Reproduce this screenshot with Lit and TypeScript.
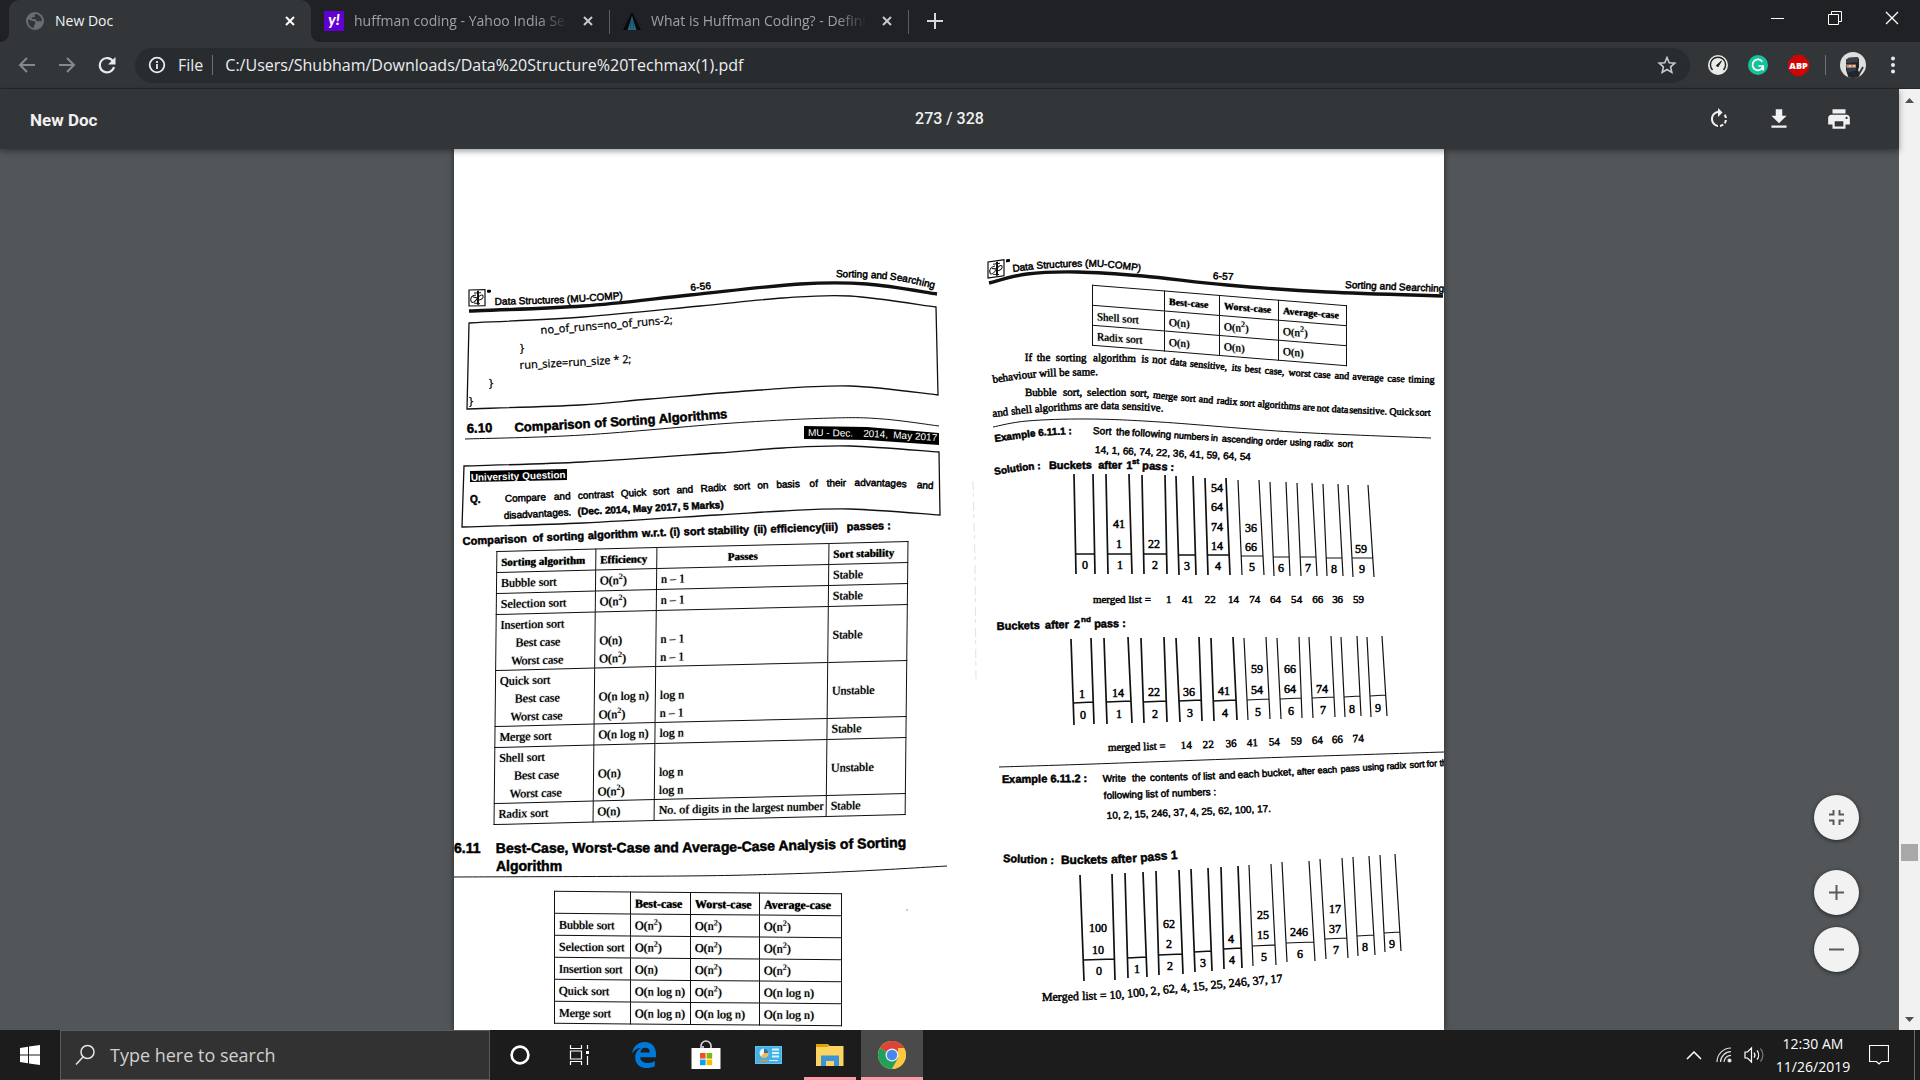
import { LitElement, html, css, svg } from "lit";
import { customElement } from "lit/decorators.js";

type Pt = [number, number];
type Word = [number, string];

/** Smooth path through the given points (Catmull-Rom turned into cubic segments). */
function curve(pts: Pt[], start = "M"): string {
  let d = `${start}${pts[0][0]} ${pts[0][1]}`;
  for (let i = 0; i < pts.length - 1; i++) {
    const p0 = pts[i - 1] ?? pts[i];
    const p1 = pts[i];
    const p2 = pts[i + 1];
    const p3 = pts[i + 2] ?? p2;
    const c1 = [p1[0] + (p2[0] - p0[0]) / 6, p1[1] + (p2[1] - p0[1]) / 6];
    const c2 = [p2[0] - (p3[0] - p1[0]) / 6, p2[1] - (p3[1] - p1[1]) / 6];
    d += ` C${c1[0].toFixed(2)} ${c1[1].toFixed(2)} ${c2[0].toFixed(2)} ${c2[1].toFixed(2)} ${p2[0]} ${p2[1]}`;
  }
  return d;
}

/** A text line set along a bent baseline; words carry their own x where the line is justified. */
function line(id: string, cls: string, pts: Pt[], words: string | Word[]) {
  const last = pts[pts.length - 1];
  const path = curve(pts) + ` l60 ${Math.round(((last[1] - pts[0][1]) / (last[0] - pts[0][0])) * 60)}`;
  const list: Word[] = typeof words === "string" ? [[pts[0][0], words]] : words;
  return svg`<path id=${id} class="base" d=${path}></path>
    <text class=${cls}><textPath href=${"#" + id}>${list.map(
      ([x, w]) => svg`<tspan x=${x - pts[0][0]}>${w} </tspan>`
    )}</textPath></text>`;
}

const rule = (pts: Pt[], w = 1) => svg`<path class="rule" stroke-width=${w} d=${curve(pts)}></path>`;

/** Frame with bent top and bottom edges. */
const frame = (top: Pt[], bottom: Pt[]) =>
  svg`<path class="rule" stroke-width="1.3" d=${curve(top) + " " + curve([...bottom].reverse(), "L") + " Z"}></path>`;

interface Bucket {
  top: [number, number, number];
  foot: [number, number, number];
  bar: number;
  values?: [string, number][];
}

function buckets(items: Bucket[], labelGap: number, tilt: number) {
  return items.map((b, i) => {
    const [tl, tr, ty] = b.top;
    const [fl, fr, fy] = b.foot;
    const k = (b.bar - ty) / (fy - ty);
    const l = tl + (fl - tl) * k;
    const r = tr + (fr - tr) * k;
    const w = i < 5 ? 1.7 : 1.2;
    const mid = Math.round((l + r) / 2);
    return svg`<path class="rule" stroke-width=${w}
        d=${`M${tl} ${ty} L${fl} ${fy} M${tr} ${ty - tilt} L${fr} ${fy - tilt} M${l} ${b.bar} L${r} ${b.bar - tilt}`}></path>
      ${(b.values ?? []).map(([v, y]) => svg`<text class="s12 mid" x=${mid - 1} y=${y + 4}>${v}</text>`)}
      <text class="s12 mid" x=${mid} y=${b.bar + labelGap + 4}>${i}</text>`;
  });
}

const PASS_1: Bucket[] = [
  { top: [1074, 1093, 473], foot: [1076, 1095, 573], bar: 553 },
  { top: [1106, 1129, 473], foot: [1108, 1132, 573], bar: 553, values: [["41", 523], ["1", 543]] },
  { top: [1142, 1165, 474], foot: [1144, 1167, 573], bar: 553, values: [["22", 543]] },
  { top: [1176, 1193, 475], foot: [1179, 1196, 574], bar: 554 },
  { top: [1205, 1226, 477], foot: [1208, 1230, 574], bar: 554, values: [["54", 487], ["64", 506], ["74", 526], ["14", 545]] },
  { top: [1238, 1259, 479], foot: [1242, 1264, 574], bar: 555, values: [["36", 527], ["66", 546]] },
  { top: [1270, 1286, 481], foot: [1274, 1290, 575], bar: 556 },
  { top: [1297, 1312, 482], foot: [1301, 1317, 575], bar: 556 },
  { top: [1323, 1338, 483], foot: [1327, 1343, 575], bar: 557 },
  { top: [1348, 1368, 484], foot: [1353, 1374, 576], bar: 557, values: [["59", 548]] },
];

const PASS_2: Bucket[] = [
  { top: [1071, 1091, 638], foot: [1074, 1094, 724], bar: 702, values: [["1", 693]] },
  { top: [1104, 1128, 637], foot: [1107, 1132, 723], bar: 701, values: [["14", 692]] },
  { top: [1141, 1164, 637], foot: [1144, 1167, 722], bar: 701, values: [["22", 691]] },
  { top: [1176, 1199, 637], foot: [1180, 1202, 721], bar: 700, values: [["36", 691]] },
  { top: [1211, 1233, 637], foot: [1214, 1237, 720], bar: 700, values: [["41", 690]] },
  { top: [1244, 1266, 637], foot: [1248, 1270, 719], bar: 699, values: [["59", 668], ["54", 689]] },
  { top: [1277, 1299, 637], foot: [1281, 1302, 718], bar: 698, values: [["66", 668], ["64", 688]] },
  { top: [1309, 1331, 636], foot: [1313, 1335, 717], bar: 697, values: [["74", 688]] },
  { top: [1341, 1357, 636], foot: [1345, 1361, 716], bar: 696 },
  { top: [1367, 1382, 636], foot: [1371, 1387, 716], bar: 695 },
];

const PASS_LAST: Bucket[] = [
  { top: [1080, 1112, 874], foot: [1084, 1115, 980], bar: 959, values: [["100", 927], ["10", 949]] },
  { top: [1125, 1143, 872], foot: [1128, 1147, 977], bar: 957 },
  { top: [1156, 1179, 870], foot: [1159, 1183, 974], bar: 954, values: [["62", 923], ["2", 943]] },
  { top: [1191, 1208, 868], foot: [1195, 1212, 971], bar: 951 },
  { top: [1221, 1238, 866], foot: [1224, 1242, 968], bar: 948, values: [["4", 938]] },
  { top: [1249, 1271, 864], foot: [1253, 1276, 965], bar: 945, values: [["25", 914], ["15", 934]] },
  { top: [1282, 1309, 861], foot: [1287, 1315, 961], bar: 942, values: [["246", 931]] },
  { top: [1320, 1342, 858], foot: [1326, 1348, 958], bar: 938, values: [["17", 908], ["37", 928]] },
  { top: [1353, 1369, 856], foot: [1358, 1375, 955], bar: 935 },
  { top: [1380, 1395, 854], foot: [1385, 1401, 951], bar: 932 },
];

const N2 = html`O(n<sup>2</sup>)`;
const N1 = html`O(n)`;
const NL = html`O(n log n)`;

@customElement("scanned-page")
export class ScannedPage extends LitElement {
  static styles = css`
    :host { display: block; }
    .sheet {
      display: grid;
      grid-template-columns: 506fr 484fr;
      align-items: start;
      background: #fff;
      color: #000;
      overflow: hidden;
      height: 100%;
      font-family: "Liberation Serif", "Times New Roman", serif;
    }
    .col { display: flex; flex-direction: column; align-items: flex-start; min-width: 0; }
    .fig { display: block; width: 100%; overflow: visible; }
    .base { fill: none; stroke: none; }
    .rule { fill: none; stroke: #111; }
    text { fill: #000; stroke: #000; stroke-width: 0.5; }
    .b10, .b11, .b12, .b13, .b14, .a9, .a10, .w10, .wb10 { font-family: "Liberation Sans", Arial, sans-serif; }
    .a9 { font-size: 9px; }
    .a10 { font-size: 10px; }
    .b10, .b11, .b12, .b13, .b14, .wb10 { font-weight: 700; }
    .b8 { font: 700 8px "Liberation Sans", Arial, sans-serif; }
    .b10 { font-size: 10px; }
    .b11 { font-size: 11px; }
    .b12 { font-size: 12px; }
    .b13 { font-size: 13px; }
    .b14 { font-size: 14px; }
    .w10, .wb10 { font-size: 10px; fill: #fff; stroke: none; }
    .s10 { font-size: 10px; }
    .s11 { font-size: 11px; }
    .s12 { font-size: 12px; }
    .code { font: 11px "Open Sans", "Noto Sans", sans-serif; stroke-width: 0.3; }
    .mid { text-anchor: middle; }
    table { border-collapse: collapse; table-layout: fixed; font-size: 12px; line-height: 18px; text-shadow: 0 0 1px #000; }
    td, th { border: 1px solid #111; padding: 0 4px; text-align: left; font-weight: 400; white-space: nowrap; }
    thead th { font-weight: 700; }
    sup { font-size: 8px; line-height: 0; vertical-align: 5px; }
    .compare { width: 411px; margin-left: 41px; transform: skewX(-0.6deg) skewY(-1.4deg); }
    .compare tr { height: 21px; }
    .compare .tall { height: 56px; }
    .compare thead { font-size: 11px; }
    .compare thead .center { text-align: center; }
    .sub { display: block; padding-left: 15px; }
    .sub.worst { padding-left: 11px; }
    .gap { display: block; height: 18px; }
    .lines { display: block; }
    .cases { width: 287px; margin-left: 100px; transform: skewY(0.5deg); }
    .cases tr { height: 22px; }
    .small { width: 254px; margin-left: 132px; font-size: 11px; transform: skewY(4.6deg); }
    .small tr { height: 20px; }
    .small thead { font-size: 10px; }
  `;

  private logo(x: number, y: number, skew: number) {
    return svg`<g transform=${`translate(${x} ${y}) skewY(${skew})`}>
      <rect class="rule" stroke-width="1.2" x="0" y="0" width="16" height="16"></rect>
      <path class="rule" stroke-width="2" d="M9 1v14"></path>
      <path class="rule" stroke-width="1" d="M5 3h7M7 5C3 5 1 8 2 11s4 1 6-2 5-5 6-3-2 5-6 4M4 7l4 1M5 13l6 1"></path>
      <rect x="18" y="0" width="4" height="3" rx="1"></rect></g>`;
  }

  private comparison() {
    const group = (name: string, best: unknown, worst: unknown, pb: string, pw: string, s: string) => html`
      <tr class="tall">
        <td>${name}<span class="sub">Best case</span><span class="sub worst">Worst case</span></td>
        <td><span class="gap"></span><span class="lines">${best}</span><span class="lines">${worst}</span></td>
        <td><span class="gap"></span><span class="lines">${pb}</span><span class="lines">${pw}</span></td>
        <td>${s}</td>
      </tr>`;
    const row = (name: string, e: unknown, p: string, s: string) =>
      html`<tr><td>${name}</td><td>${e}</td><td>${p}</td><td>${s}</td></tr>`;
    return html`<table class="compare">
      <colgroup><col style="width:99px" /><col style="width:61px" /><col style="width:172px" /><col style="width:79px" /></colgroup>
      <thead><tr><th>Sorting algorithm</th><th>Efficiency</th><th class="center">Passes</th><th>Sort stability</th></tr></thead>
      <tbody>
        ${row("Bubble sort", N2, "n – 1", "Stable")} ${row("Selection sort", N2, "n – 1", "Stable")}
        ${group("Insertion sort", N1, N2, "n – 1", "n – 1", "Stable")}
        ${group("Quick sort", NL, N2, "log n", "n – 1", "Unstable")}
        ${row("Merge sort", NL, "log n", "Stable")}
        ${group("Shell sort", N1, N2, "log n", "log n", "Unstable")}
        ${row("Radix sort", N1, "No. of digits in the largest number", "Stable")}
      </tbody>
    </table>`;
  }

  private cases(cls: string, cols: number[], rows: [string, unknown, unknown, unknown][]) {
    return html`<table class=${cls}>
      <colgroup>${cols.map((w) => html`<col style="width:${w}px" />`)}</colgroup>
      <thead><tr><th></th><th>Best-case</th><th>Worst-case</th><th>Average-case</th></tr></thead>
      <tbody>${rows.map(([n, a, b, c]) => html`<tr><th>${n}</th><td>${a}</td><td>${b}</td><td>${c}</td></tr>`)}</tbody>
    </table>`;
  }

  render() {
    return html`<article class="sheet">
      <section class="col">
        <svg class="fig" viewBox="454 149 506 397">
          ${this.logo(469, 290, -1)}
          ${line("l1", "a10", [[495, 305], [560, 303], [620, 299]], "Data Structures (MU-COMP)")}
          ${line("l2", "a10", [[691, 291], [710, 289]], "6-56")}
          ${line("l3", "a10", [[836, 277], [870, 278], [900, 281], [936, 289]], "Sorting and Searching")}
          ${rule([[469, 311], [583, 306], [690, 295], [800, 284], [867, 284], [937, 294]], 3.4)}
          ${frame(
            [[469, 323], [583, 317], [700, 306], [783, 298], [850, 296], [936, 307]],
            [[467, 409], [580, 405], [650, 399], [760, 390], [850, 386], [938, 395]]
          )}
          ${line("l4", "code", [[541, 334], [668, 324]], "no_of_runs=no_of_runs-2;")}
          <text class="code" x="520" y="352">}</text>
          ${line("l5", "code", [[520, 369], [629, 363]], "run_size=run_size * 2;")}
          <text class="code" x="489" y="387">}</text>
          <text class="code" x="469" y="405">}</text>
          ${line("l6", "b13", [[467, 433], [493, 432]], "6.10")}
          ${line("l7", "b13", [[515, 432], [620, 426], [731, 418]], "Comparison of Sorting Algorithms")}
          ${rule([[465, 439], [583, 435], [733, 423], [833, 418], [883, 419], [939, 426]])}
          <path d="M804 426 L867 427 L939 433 V445 L867 440 L804 439 Z"></path>
          ${line("l8", "w10", [[808, 436], [870, 437], [935, 441]], [[808, "MU - Dec."], [863, "2014,"], [893, "May 2017"]])}
          ${frame(
            [[464, 466], [583, 462], [717, 453], [783, 448], [850, 446], [939, 452]],
            [[462, 527], [583, 523], [717, 515], [783, 511], [850, 509], [940, 515]]
          )}
          <path d="M470 471 L567 469 V480 L470 482 Z"></path>
          ${line("l9", "wb10", [[471, 481], [566, 478]], "University Question")}
          <text class="b10" x="470" y="503">Q.</text>
          ${line("l10", "a10", [[505, 502], [621, 497], [701, 492], [777, 488], [867, 486], [933, 489]], [
            [505, "Compare"], [554, "and"], [578, "contrast"], [621, "Quick"], [653, "sort"], [677, "and"], [701, "Radix"],
            [734, "sort"], [758, "on"], [777, "basis"], [810, "of"], [827, "their"], [855, "advantages"], [917, "and"],
          ])}
          ${line("l11", "a10", [[504, 519], [578, 515]], "disadvantages.")}
          ${line("l12", "b10", [[578, 515], [723, 508]], "(Dec. 2014, May 2017, 5 Marks)")}
          ${line("l13", "b11", [[463, 545], [640, 537], [760, 533], [894, 529]], [
            [463, "Comparison"], [533, "of"], [547, "sorting"], [588, "algorithm"], [642, "w.r.t."], [670, "(i)"],
            [684, "sort stability"], [754, "(ii)"], [771, "efficiency(iii)"], [847, "passes :"],
          ])}
        </svg>
        ${this.comparison()}
        <svg class="fig" viewBox="454 820 506 72">
          <text class="b14" x="454" y="853">6.11</text>
          ${line("l14", "b14", [[496, 853], [700, 852], [800, 850], [911, 847]], "Best-Case, Worst-Case and Average-Case Analysis of Sorting")}
          <text class="b14" x="496" y="871">Algorithm</text>
          ${rule([[454, 877], [683, 876], [783, 874], [860, 871], [947, 866]])}
          <circle cx="907" cy="910" r="1" fill="#bbb"></circle>
        </svg>
        ${this.cases("cases", [76, 60, 69, 82], [
          ["Bubble sort", N2, N2, N2],
          ["Selection sort", N2, N2, N2],
          ["Insertion sort", N1, N2, N2],
          ["Quick sort", NL, N2, NL],
          ["Merge sort", NL, NL, NL],
        ])}
      </section>
      <section class="col">
        <svg class="fig" viewBox="960 149 484 146">
          ${this.logo(988, 262, -8)}
          ${line("r1", "a10", [[1013, 272], [1050, 268], [1100, 267], [1145, 272]], "Data Structures (MU-COMP)")}
          ${line("r2", "a10", [[1213, 279], [1232, 280]], "6-57")}
          ${line("r3", "a10", [[1345, 288], [1395, 290], [1442, 292]], "Sorting and Searching")}
          ${rule([[989, 283], [1027, 274], [1077, 272], [1143, 276], [1227, 285], [1327, 292], [1443, 296]], 3.4)}
        </svg>
        ${this.cases("small", [72, 55, 59, 68], [
          ["Shell sort", N1, N2, N2],
          ["Radix sort", N1, N1, N1],
        ])}
        <svg class="fig" viewBox="960 355 484 115">
          ${line("r4", "s11", [[1025, 360], [1135, 361], [1193, 366], [1283, 374], [1377, 380], [1433, 382]], [
            [1025, "If"], [1037, "the"], [1056, "sorting"], [1093, "algorithm"], [1141, "is"], [1152, "not"],
          ])}
          ${line("r5", "s10", [[1025, 360], [1135, 361], [1193, 366], [1283, 374], [1377, 380], [1433, 382]], [
            [1170, "data"], [1190, "sensitive,"], [1232, "its"], [1245, "best"], [1265, "case,"], [1289, "worst"],
            [1314, "case"], [1335, "and"], [1353, "average"], [1388, "case"], [1409, "timing"],
          ])}
          ${line("r6", "s11", [[993, 382], [1040, 376], [1103, 374]], "behaviour will be same.")}
          ${line("r7", "s11", [[1025, 395], [1127, 395], [1173, 399], [1260, 406], [1350, 412], [1432, 415]], [
            [1025, "Bubble"], [1063, "sort,"], [1087, "selection"], [1130, "sort,"],
          ])}
          ${line("r8", "s10", [[1025, 395], [1127, 395], [1173, 399], [1260, 406], [1350, 412], [1432, 415]], [
            [1153, "merge"], [1181, "sort"], [1199, "and"], [1217, "radix"], [1240, "sort"], [1258, "algorithms"],
            [1303, "are"], [1317, "not"], [1332, "data"], [1350, "sensitive."], [1390, "Quick"], [1416, "sort"],
          ])}
          ${line("r9", "s11", [[993, 416], [1040, 411], [1103, 408], [1170, 411]], "and shell algorithms are data sensitive.")}
          ${rule([[993, 426], [1027, 420], [1087, 418], [1160, 421], [1293, 431], [1431, 437]])}
          ${line("r10", "b10", [[995, 441], [1040, 435], [1076, 433]], "Example 6.11.1 :")}
          ${line("r11", "a10", [[1093, 433], [1170, 437], [1260, 443], [1346, 446]], [
            [1093, "Sort"], [1116, "the"], [1132, "following"],
          ])}
          ${line("r12", "a9", [[1093, 433], [1170, 437], [1260, 443], [1346, 446]], [
            [1174, "numbers"], [1211, "in"], [1222, "ascending"], [1266, "order"], [1290, "using"], [1314, "radix"], [1338, "sort"],
          ])}
          ${line("r13", "a10", [[1095, 452], [1245, 459]], "14, 1, 66, 74, 22, 36, 41, 59, 64, 54")}
          ${line("r14", "b10", [[995, 474], [1020, 470], [1042, 468]], "Solution :")}
          ${line("r15", "b11", [[1049, 468], [1132, 468], [1173, 470]], [[1049, "Buckets"], [1098, "after"], [1126, "1"], [1142, "pass :"]])}
          <text class="b8" x="1132" y="463">st</text>
        </svg>
        <svg class="fig" viewBox="960 470 484 145">
          <path d="M973 480 L975 560 L976 680" fill="none" stroke="#e2e2e2" stroke-width="1" stroke-dasharray="9 3 4 5"></path>
          ${buckets(PASS_1, 11, 0)}
          ${line("r16", "s11", [[1093, 602], [1363, 602]], [
            [1093, "merged list ="], [1166, "1"], [1182, "41"], [1205, "22"], [1228, "14"], [1249, "74"], [1270, "64"],
            [1291, "54"], [1312, "66"], [1332, "36"], [1353, "59"],
          ])}
        </svg>
        <svg class="fig" viewBox="960 615 484 143">
          ${line("r17", "b11", [[997, 629], [1071, 627], [1128, 626]], [[997, "Buckets"], [1045, "after"], [1074, "2"], [1094, "pass :"]])}
          <text class="b8" x="1081" y="621">nd</text>
          ${buckets(PASS_2, 12, 1)}
          ${line("r18", "s11", [[1108, 750], [1180, 748], [1362, 741]], [
            [1108, "merged list ="], [1181, "14"], [1203, "22"], [1226, "36"], [1247, "41"], [1269, "54"], [1291, "59"],
            [1312, "64"], [1332, "66"], [1353, "74"],
          ])}
        </svg>
        <svg class="fig" viewBox="960 758 484 92">
          ${rule([[999, 766], [1093, 763], [1260, 757], [1444, 751]])}
          ${line("r19", "b11", [[1002, 782], [1086, 781]], "Example 6.11.2 :")}
          ${line("r20", "a10", [[1103, 781], [1193, 779], [1260, 776], [1327, 772], [1393, 768], [1444, 765]], [
            [1103, "Write"], [1132, "the"], [1150, "contents"], [1192, "of"], [1203, "list"], [1219, "and"], [1238, "each"],
            [1262, "bucket,"],
          ])}
          ${line("r20b", "a9", [[1103, 781], [1193, 779], [1260, 776], [1327, 772], [1393, 768], [1444, 765]], [
            [1297, "after"], [1318, "each"], [1341, "pass"], [1363, "using"], [1387, "radix"],
            [1410, "sort"], [1427, "for"], [1440, "the"],
          ])}
          ${line("r21", "a10", [[1104, 798], [1219, 794]], "following list of numbers :")}
          ${line("r22", "a10", [[1107, 818], [1269, 811]], "10, 2, 15, 246, 37, 4, 25, 62, 100, 17.")}
        </svg>
        <svg class="fig" viewBox="960 850 484 180">
          ${line("r23", "b11", [[1003, 861], [1053, 863]], "Solution :")}
          ${line("r24", "b12", [[1061, 863], [1120, 862], [1174, 858]], "Buckets after pass 1")}
          ${buckets(PASS_LAST, 11, 1)}
          ${line("r25", "s12", [[1042, 1000], [1110, 998], [1160, 993], [1273, 982]], "Merged list = 10, 100, 2, 62, 4, 15, 25, 246, 37, 17")}
        </svg>
      </section>
    </article>`;
  }
}

const x10 = svg`<path d="M1 1l8 8M9 1l-8 8" stroke="currentColor" stroke-width="2"></path>`;

@customElement("app-root")
export class AppRoot extends LitElement {
  static styles = css`
    :host { display: block; font-family: "Open Sans", "Noto Sans", sans-serif; color: #e8eaed; }
    * { box-sizing: border-box; }
    button { border: 0; padding: 0; margin: 0; background: none; color: inherit; font: inherit; display: flex; align-items: center; justify-content: center; }
    svg { display: block; }
    .screen { display: flex; flex-direction: column; height: 100vh; overflow: hidden; background: #525659; }
    .tabs { display: flex; height: 42px; background: #202124; padding-left: 9px; flex: none; }
    .tab { display: flex; align-items: center; width: 299px; height: 42px; padding: 0 12px 0 13px; gap: 10px; color: #9da1a6; position: relative; }
    .tab.active { width: 302px; background: #323639; color: #f1f3f4; border-radius: 10px 10px 0 0; padding: 0 11px 0 17px; gap: 11px; }
    .tab.active::before, .tab.active::after { content: ""; position: absolute; bottom: 0; width: 9px; height: 9px; }
    .tab.active::before { left: -9px; background: radial-gradient(circle at 0 0, #202124 9px, #323639 9px); }
    .tab.active::after { right: -9px; background: radial-gradient(circle at 100% 0, #202124 9px, #323639 9px); }
    .tab .name { flex: 1; min-width: 0; font-size: 14px; line-height: 20px; justify-content: flex-start; white-space: nowrap; overflow: hidden; mask-image: linear-gradient(90deg, #000 86%, transparent 100%); }
    .tab.active .name { mask-image: none; }
    .tab .x { width: 20px; height: 20px; color: #c6c9cc; flex: none; }
    .tab.active .x { color: #fff; }
    .tab.sep::after { content: ""; position: absolute; right: 0; top: 10px; height: 24px; width: 1px; background: #5a5d61; }
    .plus { width: 52px; color: #d5d7da; }
    .win { margin-left: auto; display: flex; height: 36px; }
    .win button { width: 57px; color: #fff; }
    .nav { display: flex; align-items: center; height: 47px; background: #323639; border-bottom: 1px solid #26292b; padding: 0 14px 0 7px; flex: none; }
    .nav > button { width: 40px; height: 34px; flex: none; }
    .dim { color: #85898c; }
    .omni { flex: 1; display: flex; align-items: center; height: 35px; border-radius: 18px; background: #282c2f; margin: 0 8px; padding: 0 13px 0 13px; font-size: 16px; }
    .omni .scheme { margin-left: 12px; padding-right: 9px; border-right: 1px solid #6c7073; line-height: 20px; }
    .omni input { flex: 1; min-width: 0; border: 0; outline: 0; background: none; color: #eceef0; font: inherit; padding: 0; margin-left: 12px; height: 30px; }
    .vbar { width: 1px; height: 20px; background: #6d7174; margin: 0 14px 0 7px; }
    .nav .menu { width: 26px; margin-left: 14px; }
    .nav .face { width: 26px; }
    .viewer { flex: 1; min-height: 0; display: flex; }
    .pdf { flex: 1; min-width: 0; display: flex; flex-direction: column; position: relative; }
    .bar { display: grid; grid-template-columns: 1fr auto 1fr; align-items: center; height: 60px; flex: none; background: #323639; color: #f1f1f1; font: 500 16px/22px Roboto, sans-serif; padding: 0 30px; z-index: 1; box-shadow: 0 2px 6px #0006; }
    .bar h1 { font: inherit; font-size: 17px; font-weight: 700; margin: 0; padding-top: 2px; }
    .tools { display: flex; justify-content: flex-end; gap: 30px; padding-right: 15px; }
    .tools button { width: 30px; height: 30px; }
    .stage { flex: 1; min-height: 0; overflow: hidden; display: flex; justify-content: center; padding-right: 1px; }
    .stage scanned-page { width: 990px; max-width: 100%; box-shadow: 0 0 6px #0008; }
    .zoom { position: absolute; right: 40px; bottom: 58px; display: flex; flex-direction: column; gap: 12px; z-index: 2; }
    .zoom button { width: 45px; height: 45px; border-radius: 50%; background: #f2f2f2; color: #5a5a5a; box-shadow: 0 1px 4px #0009; }
    .zoom .fit { margin-bottom: 18px; }
    .scroll { width: 21px; flex: none; background: #f1f1f1; display: flex; flex-direction: column; align-items: center; }
    .scroll button { width: 21px; height: 22px; color: #505050; }
    .track { flex: 1; display: flex; flex-direction: column; width: 17px; }
    .before { flex: 733; }
    .thumb { height: 17px; background: #a8a8a8; }
    .after { flex: 147; }
    .task { height: 50px; flex: none; display: flex; background: #1c1c1c; color: #fff; }
    .task .start { width: 60px; }
    .search { width: 430px; display: flex; align-items: center; gap: 14px; background: #323232; border: 1px solid #5b5b5b; padding: 0 13px; color: #e6e6e6; }
    .search input { flex: 1; min-width: 0; border: 0; outline: 0; background: none; font: inherit; font-size: 18px; color: inherit; padding: 0; }
    .search input::placeholder { color: #d0d0d0; opacity: 1; }
    .apps { display: flex; }
    .apps button { width: 62px; }
    .apps .slim { width: 60px; }
    .apps .gap { margin-right: 3px; }
    .apps .open { padding-top: 3px; border-bottom: 3px solid #fb9aa2; }
    .apps .folder { width: 52px; margin: 0 5px; }
    .apps .current { background: #4a4a4a; }
    .tray { margin-left: auto; display: flex; align-items: center; }
    .tray button { height: 50px; }
    .tray .ic { width: 30px; }
    .clock { width: 88px; text-align: center; font-size: 14px; line-height: 23px; }
    .tray .note { width: 44px; margin: 0 13px 0 0; }
    .tray .desk { width: 6px; border-left: 1px solid #6a6a6a; }
  `;

  private tab(cls: string, icon: unknown, name: string) {
    return html`<div class="tab ${cls}">
      ${icon}<button class="name">${name}</button>
      <button class="x" aria-label="Close tab"><svg width="10" height="10" viewBox="0 0 10 10">${x10}</svg></button>
    </div>`;
  }

  render() {
    const globe = html`<svg width="18" height="18" viewBox="0 0 18 18"><circle cx="9" cy="9" r="9" fill="#6a6e72"></circle>
      <path d="M2 8c2-1 3 1 5 1s3 1 2 3-1 1-1 4c-3 0-6-3-6-8zM9 2c3 0 6 2 7 6-1 2-2 1-3 1s-2 1-3-1-3 0-4-1 0-2 2-2 0-2 1-3z" fill="#323639"></path></svg>`;
    const yahoo = html`<svg width="20" height="20" viewBox="0 0 20 20"><rect width="20" height="20" fill="#6001d2"></rect>
      <text x="10" y="14" text-anchor="middle" font-size="15" font-weight="900" font-family="Lato, sans-serif" fill="#fff" font-style="italic">y!</text></svg>`;
    const tower = html`<svg width="18" height="18" viewBox="0 0 18 18"><path d="M9 0L0 18h4L9 6l5 12h4z" fill="#08090a"></path>
      <path d="M9 4L5 18h8z" fill="#2f7ea3"></path><path d="M8 9l-1 9M10 9l1 9M9 6v12" stroke="#174a63" stroke-width="1"></path></svg>`;
    return html`<div class="screen">
      <header class="tabs">
        ${this.tab("active", globe, "New Doc")} ${this.tab("sep", yahoo, "huffman coding - Yahoo India Search")}
        ${this.tab("sep", tower, "What is Huffman Coding? - Definition")}
        <button class="plus" aria-label="New tab"><svg width="16" height="16" viewBox="0 0 16 16"><path d="M8 0v16M0 8h16" stroke="currentColor" stroke-width="2"></path></svg></button>
        <div class="win">
          <button aria-label="Minimize"><svg width="13" height="13" viewBox="0 0 13 13"><path d="M0 6.500h13" stroke="#fff"></path></svg></button>
          <button aria-label="Restore"><svg width="14" height="14" viewBox="0 0 14 14"><path d="M.5 3.500h10v10h-10zM3.500 3V.5h10v10h-3" fill="none" stroke="#fff"></path></svg></button>
          <button aria-label="Close"><svg width="14" height="14" viewBox="0 0 14 14"><path d="M1 1l12 12M13 1L1 13" stroke="#fff" stroke-width="1.300"></path></svg></button>
        </div>
      </header>
      <nav class="nav">
        <button class="dim" aria-label="Back"><svg width="18" height="16" viewBox="0 0 18 16"><path d="M9 1L2 8l7 7M2 8h15" fill="none" stroke="currentColor" stroke-width="2"></path></svg></button>
        <button class="dim" aria-label="Forward"><svg width="18" height="16" viewBox="0 0 18 16"><path d="M9 1l7 7-7 7M16 8H1" fill="none" stroke="currentColor" stroke-width="2"></path></svg></button>
        <button aria-label="Reload"><svg width="18" height="18" viewBox="0 0 18 18"><path d="M15 5.200A7.200 7.200 0 1 0 16 11" fill="none" stroke="currentColor" stroke-width="2.200"></path><path d="M17.500 1v7.500H10z" fill="currentColor"></path></svg></button>
        <div class="omni">
          <svg width="18" height="18" viewBox="0 0 18 18"><circle cx="9" cy="9" r="7.300" fill="none" stroke="#e8eaed" stroke-width="1.800"></circle><path d="M9 8v5M9 5v2" stroke="#e8eaed" stroke-width="1.800"></path></svg>
          <span class="scheme">File</span>
          <input aria-label="Address" value="C:/Users/Shubham/Downloads/Data%20Structure%20Techmax(1).pdf" />
          <button aria-label="Bookmark"><svg width="20" height="20" viewBox="0 0 20 20"><path d="M10 2.500l2.200 5.200 5.600.5-4.200 3.700 1.200 5.500-4.800-2.900-4.800 2.900 1.200-5.500L2.200 8.200l5.600-.5z" fill="none" stroke="#c8cacc" stroke-width="1.600"></path></svg></button>
        </div>
        <button aria-label="Speed test"><svg width="20" height="20" viewBox="0 0 20 20"><circle cx="10" cy="10" r="10" fill="#e9ebe6"></circle><path d="M4.500 15a7.600 7.600 0 1 1 11 0" fill="none" stroke="#222" stroke-width="1.500"></path><path d="M8.300 10.500L13.500 6l-3.700 6z" fill="#222" stroke="#222"></path></svg></button>
        <button aria-label="Grammarly"><svg width="20" height="20" viewBox="0 0 20 20"><circle cx="10" cy="10" r="10" fill="#15c39a"></circle><path d="M14.300 6.700A5.400 5.400 0 1 0 15.200 11M10.500 11h4.700v4.500" fill="none" stroke="#fff" stroke-width="1.700"></path></svg></button>
        <button aria-label="Adblock Plus"><svg width="21" height="21" viewBox="0 0 21 21"><path d="M6.500 0h8L21 6.500v8L14.500 21h-8L0 14.500v-8z" fill="#cf0505"></path><text x="10.500" y="14" text-anchor="middle" font-size="9" font-weight="800" font-family="Open Sans, sans-serif" fill="#fff">ABP</text></svg></button>
        <span class="vbar"></span>
        <button class="face" aria-label="Profile"><svg width="26" height="26" viewBox="0 0 26 26"><clipPath id="av"><circle cx="13" cy="13" r="13"></circle></clipPath><g clip-path="url(#av)"><rect width="26" height="26" fill="#dedede"></rect><path d="M6 8l4-2 8-.5 1 1.500v8l-1 3 2 4-2 5H9l-3-9z" fill="#20242b"></path><path d="M6 7.500l3-2 9-.5v5l-9 1H6z" fill="#3a4048"></path><path d="M6 12.500h10v3.500H7z" fill="#c98f68"></path><path d="M9 14h2M13 14h2" stroke="#fff" stroke-width="1"></path><path d="M6 16l10-.5v3l-8 2z" fill="#2c3c50"></path><path d="M19 22l4-7" stroke="#333" stroke-width="1.800"></path></g></svg></button>
        <button class="menu" aria-label="Menu"><svg width="6" height="18" viewBox="0 0 6 18"><g fill="#e8eaed"><circle cx="3" cy="2.500" r="2"></circle><circle cx="3" cy="9" r="2"></circle><circle cx="3" cy="15.500" r="2"></circle></g></svg></button>
      </nav>
      <main class="viewer">
        <div class="pdf">
          <div class="bar">
            <h1>New Doc</h1>
            <span class="count">273 / 328</span>
            <div class="tools">
              <button aria-label="Rotate"><svg width="24" height="24" viewBox="0 0 24 24" fill="#f1f1f1"><path d="M15.550 5.550L11 1v3.070C7.060 4.560 4 7.920 4 12s3.050 7.440 7 7.930v-2.020c-2.840-.48-5-2.940-5-5.910s2.160-5.430 5-5.910V10l4.550-4.450zM19.930 11c-.17-1.390-.72-2.730-1.620-3.890l-1.420 1.420c.54.75.88 1.600 1.020 2.470h2.020zM13 17.900v2.020c1.390-.17 2.740-.71 3.900-1.610l-1.440-1.440c-.75.54-1.590.89-2.460 1.030zm3.890-2.420l1.420 1.410c.9-1.160 1.450-2.500 1.620-3.890h-2.020c-.14.87-.48 1.720-1.020 2.480z"></path></svg></button>
              <button aria-label="Download"><svg width="26" height="26" viewBox="0 0 24 24" fill="#f1f1f1"><path d="M19 9h-4V3H9v6H5l7 7 7-7zM5 18v2h14v-2H5z"></path></svg></button>
              <button aria-label="Print"><svg width="26" height="26" viewBox="0 0 24 24" fill="#f1f1f1"><path d="M19 8H5c-1.660 0-3 1.340-3 3v6h4v4h12v-4h4v-6c0-1.660-1.340-3-3-3zm-3 11H8v-5h8v5zm3-7c-.55 0-1-.45-1-1s.45-1 1-1 1 .45 1 1-.45 1-1 1zm-1-9H6v4h12V3z"></path></svg></button>
            </div>
          </div>
          <div class="stage"><scanned-page></scanned-page></div>
          <div class="zoom">
            <button class="fit" aria-label="Fit to page"><svg width="15" height="15" viewBox="0 0 15 15"><path d="M0 4.500h4.500V0M10.500 0v4.500H15M0 10.500h4.500V15M10.500 15v-4.500H15" fill="none" stroke="currentColor" stroke-width="2"></path></svg></button>
            <button aria-label="Zoom in"><svg width="15" height="15" viewBox="0 0 15 15"><path d="M7.500 0v15M0 7.500h15" stroke="currentColor" stroke-width="2"></path></svg></button>
            <button aria-label="Zoom out"><svg width="15" height="15" viewBox="0 0 15 15"><path d="M0 7.500h15" stroke="currentColor" stroke-width="2"></path></svg></button>
          </div>
        </div>
        <div class="scroll">
          <button aria-label="Scroll up"><svg width="9" height="5" viewBox="0 0 9 5"><path d="M0 5l4.500-5L9 5z" fill="currentColor"></path></svg></button>
          <div class="track"><div class="before"></div><div class="thumb"></div><div class="after"></div></div>
          <button aria-label="Scroll down"><svg width="9" height="5" viewBox="0 0 9 5"><path d="M0 0l4.500 5L9 0z" fill="currentColor"></path></svg></button>
        </div>
      </main>
      <footer class="task">
        <button class="start" aria-label="Start"><svg width="20" height="20" viewBox="0 0 20 20" fill="#fff"><path d="M0 3l8-1.200V9.500H0zM9 1.600L20 0v9.500H9zM0 10.500h8v7.700L0 17zM9 10.500h11V20L9 18.400z"></path></svg></button>
        <label class="search"><svg width="22" height="22" viewBox="0 0 22 22"><circle cx="13.500" cy="8" r="6.500" fill="none" stroke="currentColor" stroke-width="1.500"></circle><path d="M9 13L2 20.500" stroke="currentColor" stroke-width="1.500"></path></svg>
          <input aria-label="Search" placeholder="Type here to search" /></label>
        <div class="apps">
          <button class="slim" aria-label="Cortana"><svg width="20" height="20" viewBox="0 0 20 20"><circle cx="10" cy="10" r="8.400" fill="none" stroke="#fff" stroke-width="2.600"></circle></svg></button>
          <button class="slim gap" aria-label="Task view"><svg width="22" height="20" viewBox="0 0 22 20"><path d="M1.500 0v3.500h11V0M1.500 20v-3.500h11V20M1.500 6h11v8h-11zM18.500 0v4M18.500 11v9" fill="none" stroke="#fff" stroke-width="1.200"></path><rect x="17" y="6" width="3" height="3" fill="#fff"></rect></svg></button>
          <button aria-label="Edge"><svg width="26" height="26" viewBox="0 0 26 26"><path d="M1 11.600C1.800 5 6.600 0 13.400 0 21 0 25 5.400 25 11.800v3.400H9.200c.2 4 4 5.800 7.800 5.800 2.600 0 4.800-.7 6.800-1.900v5.100C21.600 25.400 19 26 16 26 8.800 26 4.200 22 4.200 15.400c0-4.400 2.500-7.900 6-9.600-4.200.2-7.200 2.500-9.200 5.800zM9.400 10.600h9.400c0-2.800-1.500-4.800-4.500-4.800s-4.500 2-4.900 4.800z" fill="#0078d7"></path></svg></button>
          <button aria-label="Store"><svg width="30" height="30" viewBox="0 0 30 30"><path d="M10 8V6a5 5 0 0 1 10 0v2M12 8V6" fill="none" stroke="#ddd" stroke-width="1.600"></path><path d="M.5 8h29v21h-29z" fill="#fff"></path><path d="M9 13h5.600v5.600H9z" fill="#f25022"></path><path d="M15.600 13h5.600v5.600h-5.600z" fill="#7fba00"></path><path d="M9 19.600h5.600v5.600H9z" fill="#00a4ef"></path><path d="M15.600 19.600h5.600v5.600h-5.600z" fill="#ffb900"></path></svg></button>
          <button aria-label="Dashboard"><svg width="27" height="18" viewBox="0 0 27 18"><rect width="27" height="18" fill="#5cc4f2"></rect><rect x="1" y="1" width="25" height="16" fill="#45b0e6"></rect><circle cx="9" cy="7" r="4.500" fill="#e8f6fd"></circle><path d="M9 7V2.500A4.500 4.500 0 0 1 13.500 7z" fill="#2276b8"></path><path d="M9 7l-3 3.400A4.500 4.500 0 0 0 13.500 7z" fill="#f4b93f"></path><path d="M17 3.500h7M17 7h7M17 10.500h7" stroke="#d9f1fc" stroke-width="2"></path><path d="M4 14.500h9" stroke="#f08c2e" stroke-width="1.500"></path><path d="M14 14.500h9" stroke="#d9f1fc" stroke-width="1"></path></svg></button>
          <button class="open folder" aria-label="File Explorer"><svg width="28" height="24" viewBox="0 0 28 24"><path d="M0 1h12l3 3h12v4H0z" fill="#e2a108"></path><path d="M0 4h11l2-1h14.500v20H0z" fill="#fcd462"></path><path d="M5 12.500h18V23h-5v-5h-8v5H5z" fill="#3b93d8"></path></svg></button>
          <button class="open current" aria-label="Chrome"><svg width="28" height="28" viewBox="0 0 28 28"><circle cx="14" cy="14" r="14" fill="#fbc740"></circle><path d="M14 14L1.900 7A14 14 0 0 1 26.100 7z" fill="#db4437"></path><path d="M14 0a14 14 0 0 1 12.100 7H14z" fill="#db4437"></path><path d="M1.900 7A14 14 0 0 0 14 28l6-10.500L14 14z" fill="#1fa15d"></path><path d="M14 28l6-10.500V7h6.100A14 14 0 0 1 14 28z" fill="#fbc740"></path><circle cx="14" cy="14" r="6.500" fill="#f1f1f1"></circle><circle cx="14" cy="14" r="5.200" fill="#4a86f0"></circle></svg></button>
        </div>
        <div class="tray">
          <button class="ic" aria-label="Hidden icons"><svg width="16" height="9" viewBox="0 0 16 9"><path d="M1 8l7-7 7 7" fill="none" stroke="#fff" stroke-width="1.500"></path></svg></button>
          <button class="ic" aria-label="Network"><svg width="16" height="16" viewBox="0 0 16 16" fill="none" stroke="#ddd" stroke-width="1.200"><path d="M1 15A14 14 0 0 1 15 1M4.500 15A10.500 10.500 0 0 1 15 4.700M8 15a7 7 0 0 1 7-6.700"></path><circle cx="13.500" cy="13.500" r="1.500" fill="#fff"></circle></svg></button>
          <button class="ic" aria-label="Volume"><svg width="20" height="18" viewBox="0 0 20 18" fill="none" stroke="#fff" stroke-width="1.200"><path d="M1 6h2.500L7.500 2v14l-4-4H1zM10 6.500a4 4 0 0 1 0 5M13 4.500a7 7 0 0 1 0 9"></path><path d="M16.500 2.500a10 10 0 0 1 0 13" stroke="#777"></path></svg></button>
          <div class="clock"><div>12:30 AM</div><div>11/26/2019</div></div>
          <button class="note" aria-label="Notifications"><svg width="20" height="20" viewBox="0 0 20 20"><path d="M.5.5h19v16H12.500L10 19l-2.500-2.500H.5z" fill="none" stroke="#fff" stroke-width="1.200"></path></svg></button>
          <button class="desk" aria-label="Show desktop"></button>
        </div>
      </footer>
    </div>`;
  }
}
